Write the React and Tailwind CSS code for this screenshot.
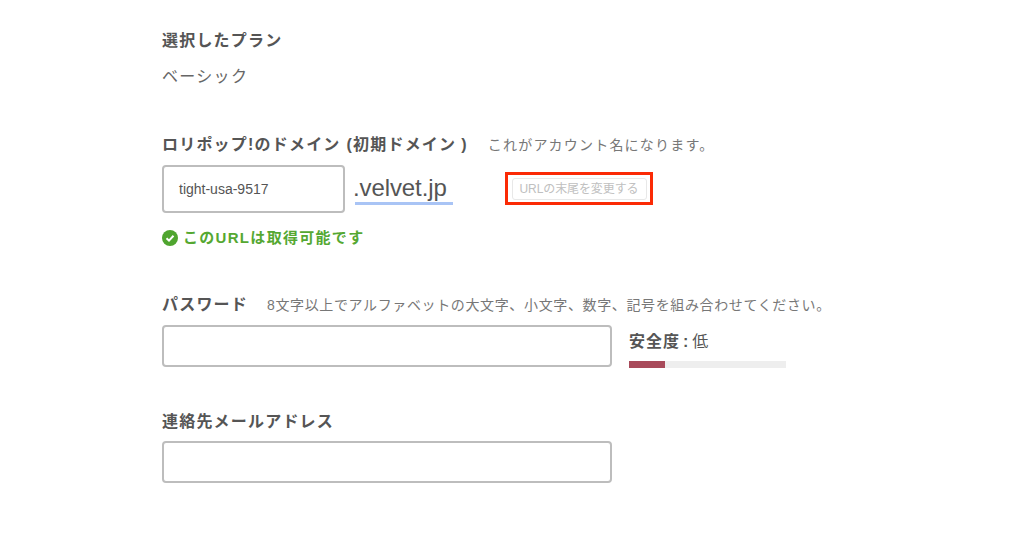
import React from "react";

const font = { fontFamily: '"Liberation Sans", "Noto Sans CJK JP", sans-serif' };

const Label = ({ children }) => (
  <span className="text-[16px] font-bold tracking-[1.2px] text-[#555] leading-[24px] whitespace-nowrap">
    {children}
  </span>
);

const Note = ({ children, className = "" }) => (
  <span className={`text-[14px] text-[#777] leading-[20px] whitespace-nowrap ${className}`}>
    {children}
  </span>
);

const App = () => {
  return (
    <div style={font} className="w-[1024px] h-[538px] bg-white overflow-hidden pl-[162px] pt-[29px]">
      <div className="h-[24px]">
        <Label>選択したプラン</Label>
      </div>
      <div className="mt-[12px] h-[24px] text-[16px] leading-[24px] tracking-[1.3px] text-[#666]">ベーシック</div>

      <div className="mt-[44px] flex items-center h-[24px]">
        <Label>
          ロリポップ!のドメイン<span className="ml-[6px]">(</span>初期ドメイン<span className="ml-[5px]">)</span>
        </Label>
        <Note className="ml-[20px] tracking-[1.2px]">これがアカウント名になります。</Note>
      </div>

      <div className="mt-[8px] flex items-start">
        <div className="w-[183px] h-[48px] border-2 border-[#bdbdbd] rounded-[4px] flex items-center pl-[15px] text-[14px] text-[#555]">
          tight-usa-9517
        </div>
        <div className="ml-[10px] w-[98px] h-[40px] border-b-[3px] border-[#a9c4f5] text-[24px] leading-[46px] tracking-[-0.1px] indent-[-2px] text-[#555]">
          .velvet.jp
        </div>
        <div className="ml-[52px] mt-[7px] w-[148px] h-[33px] border-[3px] border-[#fb2a05] flex items-center justify-center">
          <div className="w-[135px] h-[22px] border border-[#e8e8e8] rounded-[3px] flex items-center justify-center text-[12px] tracking-[-0.1px] text-[#c0c0c0] whitespace-nowrap">
            URLの末尾を変更する
          </div>
        </div>
      </div>

      <div className="mt-[15px] flex items-center h-[20px]">
        <svg width="16" height="16" viewBox="0 0 16 16">
          <circle cx="8" cy="8" r="8" fill="#4fa52f" />
          <path d="M4.5 8.2 7 10.6 11.5 5.8" fill="none" stroke="#fff" strokeWidth="2" />
        </svg>
        <span className="ml-[5px] text-[15px] font-bold tracking-[1.3px] text-[#55a832]">このURLは取得可能です</span>
      </div>

      <div className="mt-[45px] flex items-center h-[24px]">
        <Label>パスワード</Label>
        <Note className="ml-[19px] tracking-[0.63px]">8文字以上でアルファベットの大文字、小文字、数字、記号を組み合わせてください。</Note>
      </div>

      <div className="mt-[8px] flex items-start">
        <div className="w-[450px] h-[42px] border-2 border-[#bdbdbd] rounded-[4px]" />
        <div className="ml-[17px] w-[157px]">
          <div className="h-[24px] text-[16px] leading-[34px] tracking-[1px] text-[#555]">
            <span className="font-bold">安全度<span className="mx-[3px]">:</span></span>
            <span>低</span>
          </div>
          <div className="mt-[12px] h-[7px] bg-[#eeeeee]">
            <div className="w-[36px] h-full bg-[#a84a5a]" />
          </div>
        </div>
      </div>

      <div className="mt-[42px] h-[24px]">
        <Label>連絡先メールアドレス</Label>
      </div>
      <div className="mt-[7px] w-[450px] h-[42px] border-2 border-[#bdbdbd] rounded-[4px]" />
    </div>
  );
};

export default App;
